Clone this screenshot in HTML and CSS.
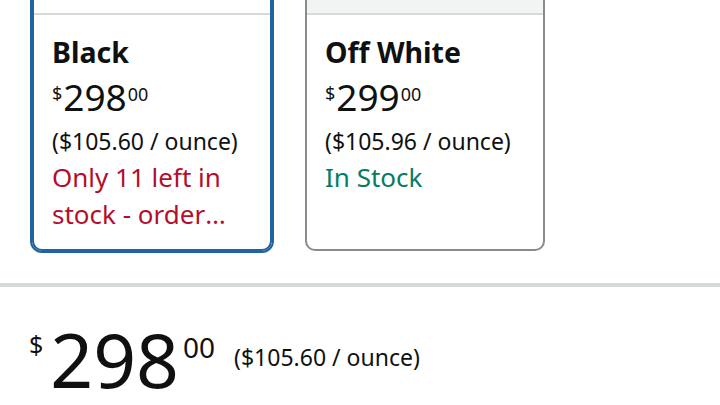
FILE: index.html
```html
<!DOCTYPE html>
<html lang="en">
<head>
<meta charset="utf-8">
<link rel="stylesheet" href="styles.css">
</head>
<body>
<div class="page">
  <div class="swatches">
    <div class="swatch selected">
      <div class="swatch-img"></div>
      <div class="swatch-body">
        <div class="swatch-name">Black</div>
        <div class="swatch-price"><span class="sym">$</span><span class="whole">298</span><span class="frac">00</span></div>
        <div class="unit">($105.60 / ounce)</div>
        <div class="avail low">Only 11 left in stock - order soon.</div>
      </div>
    </div>
    <div class="swatch">
      <div class="swatch-img gray"></div>
      <div class="swatch-body">
        <div class="swatch-name">Off White</div>
        <div class="swatch-price"><span class="sym">$</span><span class="whole">299</span><span class="frac">00</span></div>
        <div class="unit">($105.96 / ounce)</div>
        <div class="avail instock">In Stock</div>
      </div>
    </div>
  </div>
  <div class="divider"></div>
  <div class="main-price">
    <span class="sym">$</span><span class="whole">298</span><span class="frac">00</span>
    <span class="main-unit">($105.60 / ounce)</span>
  </div>
</div>
</body>
</html>
```
FILE: styles.css
```css
* { box-sizing: border-box; }
html, body { margin: 0; padding: 0; background: #fff; }
body {
  font-family: "Noto Sans", "Open Sans", sans-serif;
  color: #0f1111;
  width: 720px;
}
.page { overflow: hidden; }
.swatches {
  display: flex;
  gap: 33px;
  padding-left: 32px;
  margin-top: -40px;
}
.swatch {
  width: 240px;
  height: 291px;
  border: 2px solid #888c8c;
  border-radius: 10px;
  overflow: hidden;
  display: flex;
  flex-direction: column;
}
.swatch.selected {
  border-color: #2162a1;
  box-shadow: 0 0 0 2px #2162a1;
}
.swatch-img {
  flex: 0 0 auto;
  height: 53px;
  border-bottom: 2px solid #d5d9d9;
  background: #fff;
}
.swatch-img.gray { background: #f2f3f3; }
.swatch-body {
  padding: 19px 18px 0 18px;
}
.swatch-name {
  font-weight: 700;
  font-size: 28.5px;
  line-height: 36px;
}
.swatch-price {
  display: flex;
  align-items: flex-start;
  height: 45px;
  margin-top: 8px;
}
.swatch-price .sym { font-size: 18px; line-height: 18px; margin-top: 6px; margin-right: 1px; }
.swatch-price .whole { font-size: 37px; line-height: 37px; }
.swatch-price .frac { font-size: 18px; line-height: 18px; margin-top: 7px; margin-left: 1px; }
.unit {
  font-size: 23px;
  line-height: 36px;
}
.avail {
  font-size: 26px;
  line-height: 37px;
  display: -webkit-box;
  -webkit-box-orient: vertical;
  -webkit-line-clamp: 2;
  overflow: hidden;
}
.low { color: #b40f2a; }
.instock { color: #067d62; }
.divider {
  height: 4px;
  background: #d5d9d9;
  margin-top: 32px;
}
.main-price {
  display: flex;
  align-items: flex-start;
  padding-left: 29px;
  padding-top: 30px;
  padding-bottom: 4px;
}
.main-price .sym { font-size: 25px; line-height: 25px; margin-top: 15px; margin-right: 7px; }
.main-price .whole { font-size: 75px; line-height: 85px; }
.main-price .frac { font-size: 28px; line-height: 28px; margin-top: 16px; margin-left: 4px; }
.main-unit { font-size: 23px; line-height: 23px; margin-left: 19px; margin-top: 29px; }
```
